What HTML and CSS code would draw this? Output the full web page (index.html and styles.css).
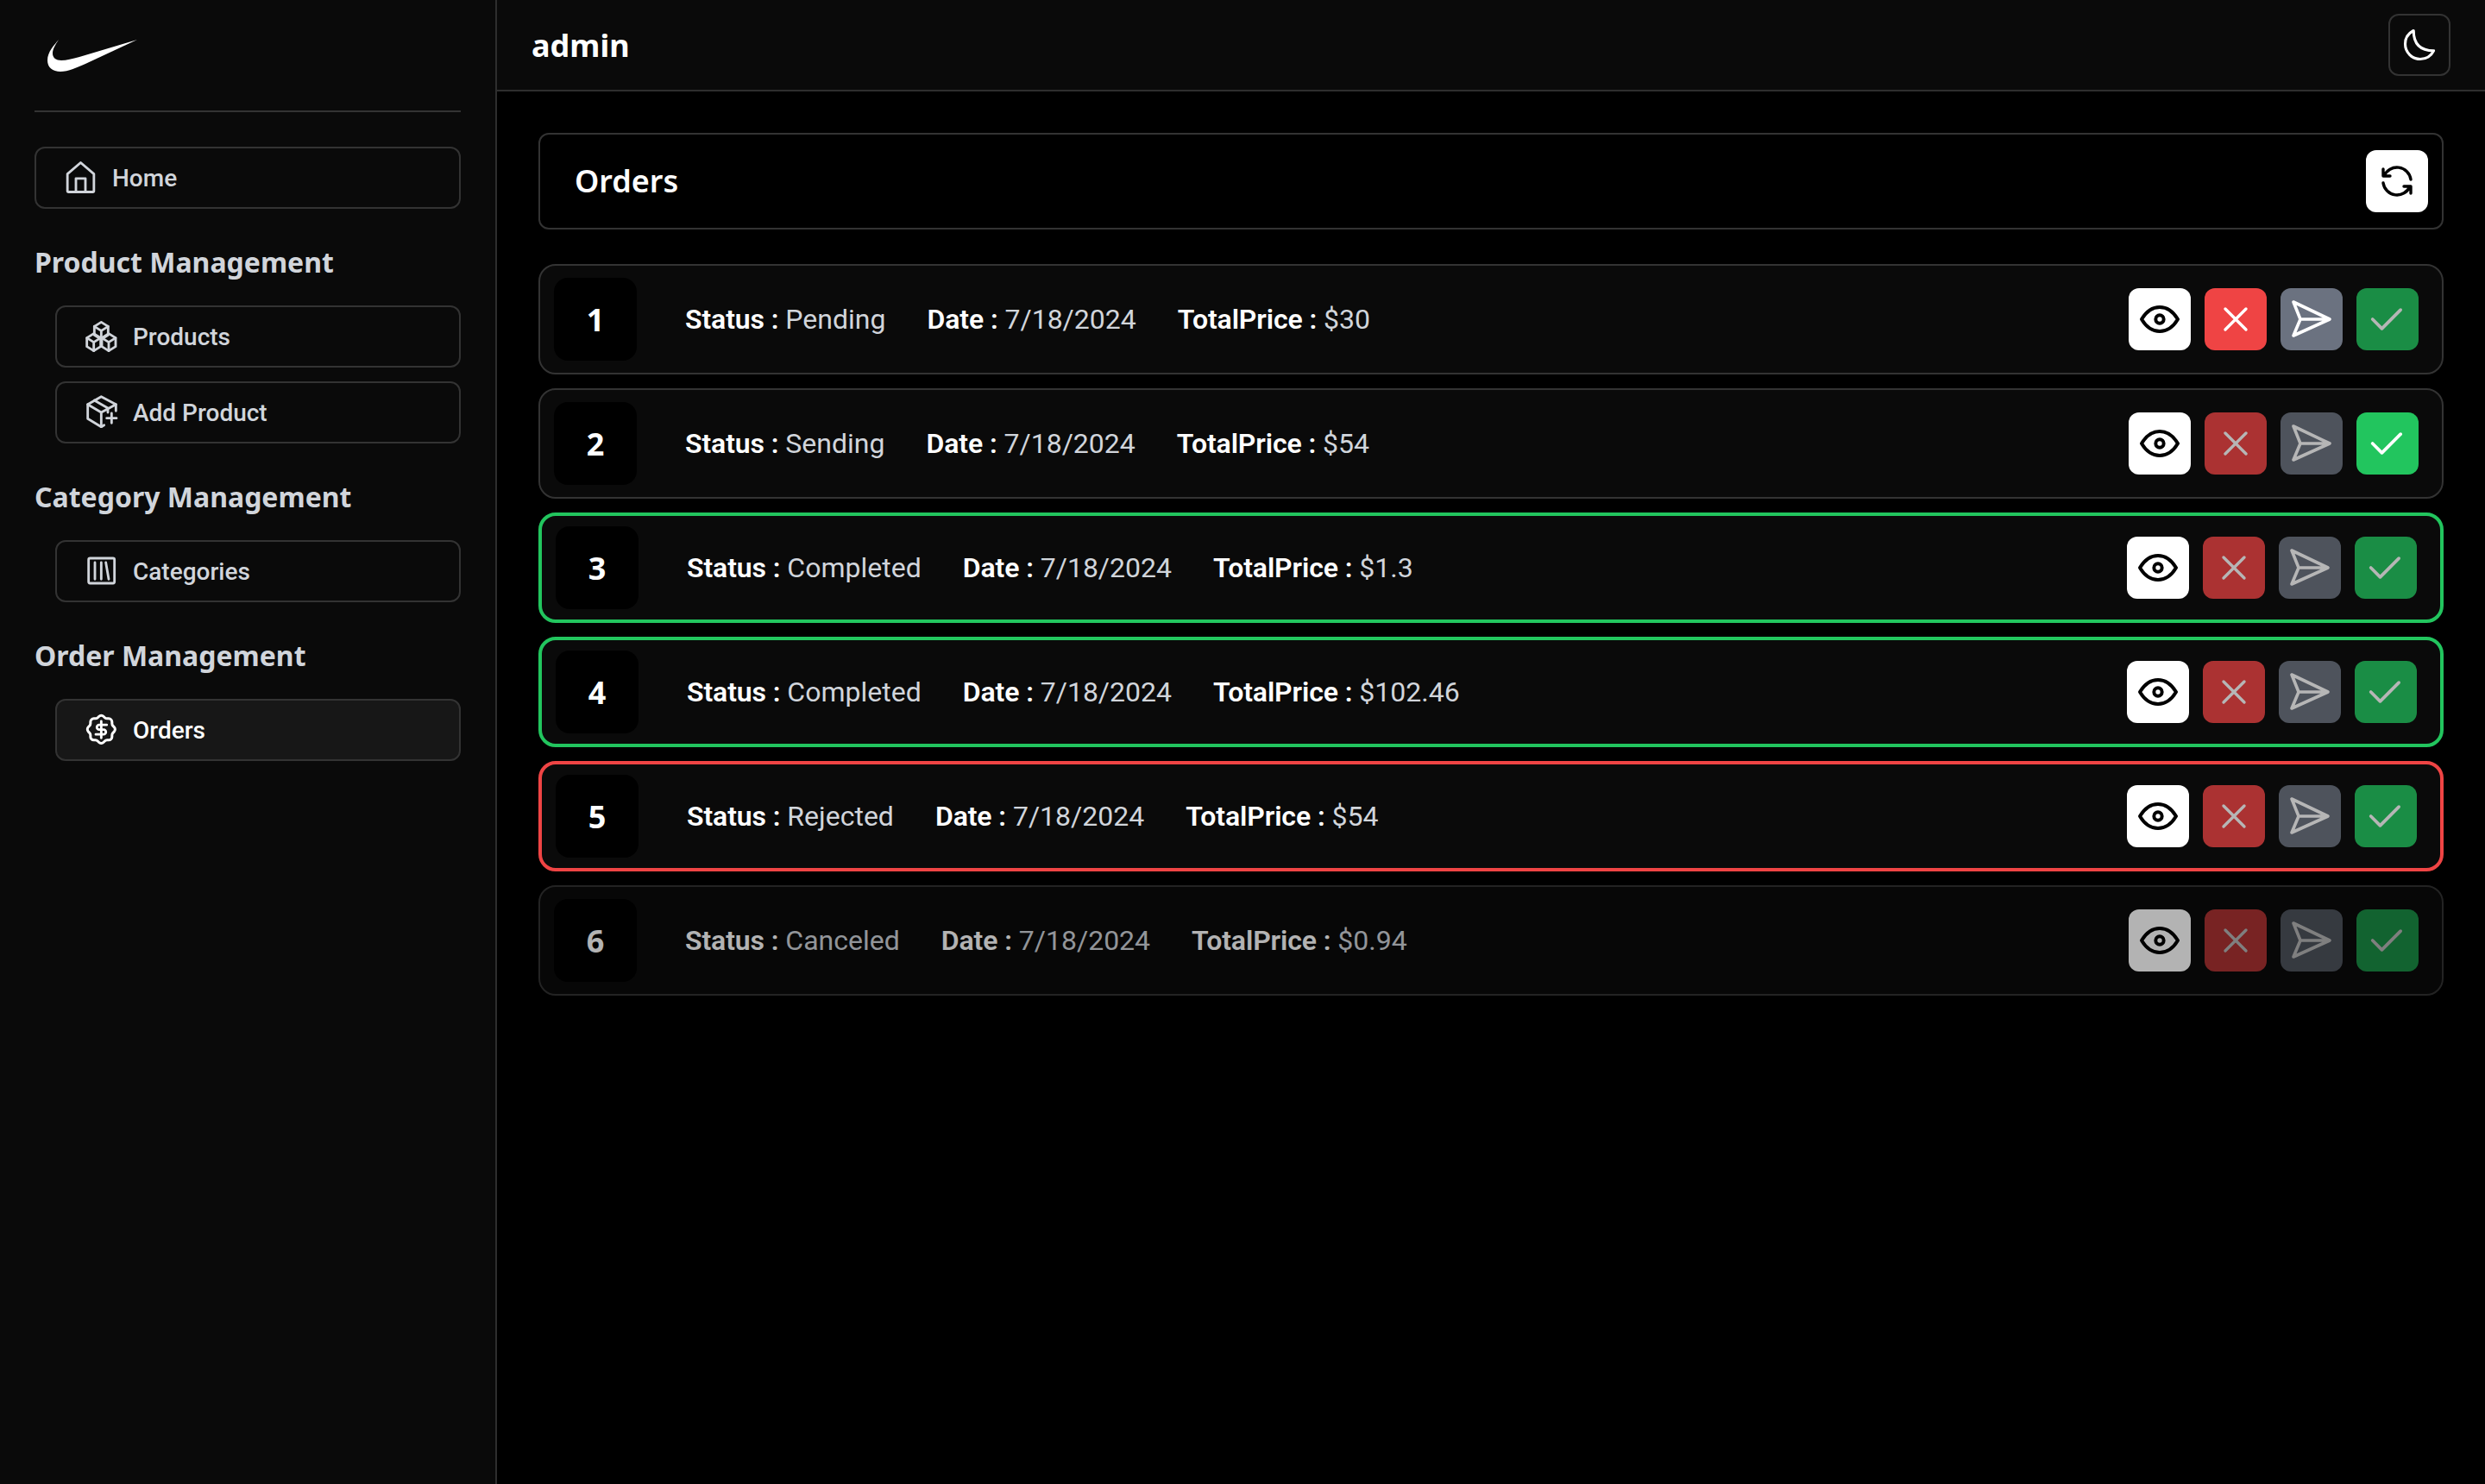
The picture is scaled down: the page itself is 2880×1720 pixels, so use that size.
FILE: index.html
```html
<!DOCTYPE html>
<html lang="en">

<head>
    <meta charset="UTF-8">
    <title>Orders</title>
    <link rel="stylesheet" href="styles.css">
</head>

<body>
    <aside class="sidebar">
        <div class="logo">
            <svg width="104" height="37" viewBox="0 0 104 37"><path fill="#fff" d="M13 0C8 6 0 14 0 24c0 8 6 13 15 13 9 0 20-5 29-9L104 0 37 20c-8 2-15 4-21 4C10 24 6 21 6 16 6 11 9 6 13 0Z"/></svg>
        </div>
        <hr class="divider">
        <a class="nav-btn">
            <svg class="nav-icon" viewBox="0 0 24 24"><path d="M3.700 9.400 12.900 1.500l9.200 7.900v11.700a.8.8 0 0 1-.8.8H4.500a.8.8 0 0 1-.8-.8Z"/><path d="M9.600 21.900v-9.400h6.600v9.400"/></svg>
            Home
        </a>

        <h3 class="nav-title">Product Management</h3>
        <div class="nav-group">
            <a class="nav-btn">
                <svg class="nav-icon" viewBox="0 0 24 24"><path d="M12.800 2 17.600 5v6l-4.800 3L8 11V5Z"/><path d="m8 5 4.800 3 4.800-3M12.800 8v6"/><path d="M7.600 10l4.800 3v6l-4.800 3-4.800-3v-6Z"/><path d="m2.800 13 4.800 3 4.800-3M7.600 16v6"/><path d="M18 10l4.800 3v6L18 22l-4.800-3v-6Z"/><path d="m13.200 13 4.800 3 4.800-3M18 16v6"/></svg>
                Products
            </a>
            <a class="nav-btn">
                <svg class="nav-icon" viewBox="0 0 24 24"><path d="M23 11V6.400L12.800 1 3.400 6.400v10L12.800 22l2-1.200"/><path d="M3.400 6.400 12.800 12 23 6.400M12.800 12v10M8 3.600 17.400 9v3"/><path d="M16.600 16h6.800M20 12.600v6.800"/></svg>
                Add Product
            </a>
        </div>

        <h3 class="nav-title">Category Management</h3>
        <div class="nav-group">
            <a class="nav-btn">
                <svg class="nav-icon" viewBox="0 0 24 24"><rect x="4" y="3" width="18" height="17.400" rx="1"/><path d="M8.400 6v11.600M12.800 6v11.600M16 6l2 11.600"/></svg>
                Categories
            </a>
        </div>

        <h3 class="nav-title">Order Management</h3>
        <div class="nav-group">
            <a class="nav-btn active">
                <svg class="nav-icon" viewBox="0 0 24 24"><path d="M5 7.200A2.200 2.200 0 0 1 7.200 5h1a2.200 2.200 0 0 0 1.550-.64l.7-.7a2.200 2.200 0 0 1 3.120 0l.7.7c.41.41.97.64 1.550.64h1A2.200 2.200 0 0 1 19 7.200v1c0 .58.23 1.140.64 1.550l.7.7a2.200 2.200 0 0 1 0 3.120l-.7.7a2.200 2.200 0 0 0-.64 1.550v1a2.200 2.200 0 0 1-2.200 2.200h-1a2.200 2.200 0 0 0-1.550.64l-.7.7a2.200 2.200 0 0 1-3.120 0l-.7-.7a2.200 2.200 0 0 0-1.550-.64h-1A2.200 2.200 0 0 1 5 16.800v-1a2.200 2.200 0 0 0-.64-1.550l-.7-.7a2.200 2.200 0 0 1 0-3.120l.7-.7A2.200 2.200 0 0 0 5 8.200Z" transform="translate(12.800 11.600) scale(1.070) translate(-12 -12)"/><path d="M16.600 8.500h-5.200a1.600 1.600 0 0 0 0 3.300h3a1.600 1.600 0 0 1 0 3.300H9M12.800 6v11.600"/></svg>
                Orders
            </a>
        </div>
    </aside>

    <div class="content">
        <header class="topbar">
            <span class="username">admin</span>
            <button class="theme-btn">
                <svg width="44" height="44" viewBox="0 0 24 24" class="line"><path d="M3 11.500a9.500 9.500 0 0 0 9.500 9.500c3.700 0 7-2.100 8.500-5.300-8.500 0-12.700-4.200-12.700-12.700C5.100 4.600 3 7.800 3 11.500Z"/></svg>
            </button>
        </header>

        <main class="main">
            <div class="page-head">
                <h1>Orders</h1>
                <button class="icon-btn white">
                    <svg width="48" height="48" viewBox="0 0 24 24" class="line"><path d="M20 11A8.100 8.100 0 0 0 4.500 9M4 5v4h4"/><path d="M4 13a8.100 8.100 0 0 0 15.500 2m.5 4v-4h-4"/></svg>
                </button>
            </div>

            <div class="order-list">
                <div class="order">
                    <div class="order-num">1</div>
                    <div class="order-info">
                        <span><b>Status :</b> Pending</span>
                        <span><b>Date :</b> 7/18/2024</span>
                        <span><b>TotalPrice :</b> $30</span>
                    </div>
                    <div class="actions">
                        <button class="icon-btn white"><svg width="56" height="56" viewBox="0 0 24 24" class="line"><path d="M10 12a2 2 0 1 0 4 0 2 2 0 0 0-4 0"/><path d="M21 12c-2.400 4-5.400 6-9 6s-6.600-2-9-6c2.400-4 5.400-6 9-6s6.600 2 9 6"/></svg></button>
                        <button class="icon-btn red"><svg width="48" height="48" viewBox="0 0 24 24" class="line"><path d="m18 6-12 12M6 6l12 12"/></svg></button>
                        <button class="icon-btn gray"><svg width="48" height="48" viewBox="0 0 48 48" class="line send"><path d="M3 4 45 24 3 43 11 24ZM11 24h34"/></svg></button>
                        <button class="icon-btn green off"><svg width="52" height="52" viewBox="0 0 24 24" class="line"><path d="m4 12 5 5L19 7"/></svg></button>
                    </div>
                </div>

                <div class="order">
                    <div class="order-num">2</div>
                    <div class="order-info">
                        <span><b>Status :</b> Sending</span>
                        <span><b>Date :</b> 7/18/2024</span>
                        <span><b>TotalPrice :</b> $54</span>
                    </div>
                    <div class="actions">
                        <button class="icon-btn white"><svg width="56" height="56" viewBox="0 0 24 24" class="line"><path d="M10 12a2 2 0 1 0 4 0 2 2 0 0 0-4 0"/><path d="M21 12c-2.400 4-5.400 6-9 6s-6.600-2-9-6c2.400-4 5.400-6 9-6s6.600 2 9 6"/></svg></button>
                        <button class="icon-btn red off"><svg width="48" height="48" viewBox="0 0 24 24" class="line"><path d="m18 6-12 12M6 6l12 12"/></svg></button>
                        <button class="icon-btn gray off"><svg width="48" height="48" viewBox="0 0 48 48" class="line send"><path d="M3 4 45 24 3 43 11 24ZM11 24h34"/></svg></button>
                        <button class="icon-btn green"><svg width="52" height="52" viewBox="0 0 24 24" class="line"><path d="m4 12 5 5L19 7"/></svg></button>
                    </div>
                </div>

                <div class="order completed">
                    <div class="order-num">3</div>
                    <div class="order-info">
                        <span><b>Status :</b> Completed</span>
                        <span><b>Date :</b> 7/18/2024</span>
                        <span><b>TotalPrice :</b> $1.3</span>
                    </div>
                    <div class="actions">
                        <button class="icon-btn white"><svg width="56" height="56" viewBox="0 0 24 24" class="line"><path d="M10 12a2 2 0 1 0 4 0 2 2 0 0 0-4 0"/><path d="M21 12c-2.400 4-5.400 6-9 6s-6.600-2-9-6c2.400-4 5.400-6 9-6s6.600 2 9 6"/></svg></button>
                        <button class="icon-btn red off"><svg width="48" height="48" viewBox="0 0 24 24" class="line"><path d="m18 6-12 12M6 6l12 12"/></svg></button>
                        <button class="icon-btn gray off"><svg width="48" height="48" viewBox="0 0 48 48" class="line send"><path d="M3 4 45 24 3 43 11 24ZM11 24h34"/></svg></button>
                        <button class="icon-btn green off"><svg width="52" height="52" viewBox="0 0 24 24" class="line"><path d="m4 12 5 5L19 7"/></svg></button>
                    </div>
                </div>

                <div class="order completed">
                    <div class="order-num">4</div>
                    <div class="order-info">
                        <span><b>Status :</b> Completed</span>
                        <span><b>Date :</b> 7/18/2024</span>
                        <span><b>TotalPrice :</b> $102.46</span>
                    </div>
                    <div class="actions">
                        <button class="icon-btn white"><svg width="56" height="56" viewBox="0 0 24 24" class="line"><path d="M10 12a2 2 0 1 0 4 0 2 2 0 0 0-4 0"/><path d="M21 12c-2.400 4-5.400 6-9 6s-6.600-2-9-6c2.400-4 5.400-6 9-6s6.600 2 9 6"/></svg></button>
                        <button class="icon-btn red off"><svg width="48" height="48" viewBox="0 0 24 24" class="line"><path d="m18 6-12 12M6 6l12 12"/></svg></button>
                        <button class="icon-btn gray off"><svg width="48" height="48" viewBox="0 0 48 48" class="line send"><path d="M3 4 45 24 3 43 11 24ZM11 24h34"/></svg></button>
                        <button class="icon-btn green off"><svg width="52" height="52" viewBox="0 0 24 24" class="line"><path d="m4 12 5 5L19 7"/></svg></button>
                    </div>
                </div>

                <div class="order rejected">
                    <div class="order-num">5</div>
                    <div class="order-info">
                        <span><b>Status :</b> Rejected</span>
                        <span><b>Date :</b> 7/18/2024</span>
                        <span><b>TotalPrice :</b> $54</span>
                    </div>
                    <div class="actions">
                        <button class="icon-btn white"><svg width="56" height="56" viewBox="0 0 24 24" class="line"><path d="M10 12a2 2 0 1 0 4 0 2 2 0 0 0-4 0"/><path d="M21 12c-2.400 4-5.400 6-9 6s-6.600-2-9-6c2.400-4 5.400-6 9-6s6.600 2 9 6"/></svg></button>
                        <button class="icon-btn red off"><svg width="48" height="48" viewBox="0 0 24 24" class="line"><path d="m18 6-12 12M6 6l12 12"/></svg></button>
                        <button class="icon-btn gray off"><svg width="48" height="48" viewBox="0 0 48 48" class="line send"><path d="M3 4 45 24 3 43 11 24ZM11 24h34"/></svg></button>
                        <button class="icon-btn green off"><svg width="52" height="52" viewBox="0 0 24 24" class="line"><path d="m4 12 5 5L19 7"/></svg></button>
                    </div>
                </div>

                <div class="order canceled">
                    <div class="order-num">6</div>
                    <div class="order-info">
                        <span><b>Status :</b> Canceled</span>
                        <span><b>Date :</b> 7/18/2024</span>
                        <span><b>TotalPrice :</b> $0.94</span>
                    </div>
                    <div class="actions">
                        <button class="icon-btn white"><svg width="56" height="56" viewBox="0 0 24 24" class="line"><path d="M10 12a2 2 0 1 0 4 0 2 2 0 0 0-4 0"/><path d="M21 12c-2.400 4-5.400 6-9 6s-6.600-2-9-6c2.400-4 5.400-6 9-6s6.600 2 9 6"/></svg></button>
                        <button class="icon-btn red off"><svg width="48" height="48" viewBox="0 0 24 24" class="line"><path d="m18 6-12 12M6 6l12 12"/></svg></button>
                        <button class="icon-btn gray off"><svg width="48" height="48" viewBox="0 0 48 48" class="line send"><path d="M3 4 45 24 3 43 11 24ZM11 24h34"/></svg></button>
                        <button class="icon-btn green off"><svg width="52" height="52" viewBox="0 0 24 24" class="line"><path d="m4 12 5 5L19 7"/></svg></button>
                    </div>
                </div>
            </div>
        </main>
    </div>
</body>

</html>
```
FILE: styles.css
```css
* {
    box-sizing: border-box;
}

body {
    margin: 0;
    height: 1720px;
    display: flex;
    background: #000;
    color: #fff;
    font-family: "Noto Sans", sans-serif;
    overflow: hidden;
}

/* sidebar */
.sidebar {
    width: 576px;
    flex-shrink: 0;
    padding: 0 40px;
    background: #0a0a0a;
    border-right: 2px solid #2e2e2e;
}

.logo {
    height: 128px;
    padding: 46px 0 0 15px;
}

.logo svg {
    display: block;
}

.divider {
    margin: 0 0 40px;
    border: 0;
    border-top: 2px solid #333;
}

.nav-btn {
    display: flex;
    align-items: center;
    gap: 18px;
    height: 72px;
    padding-left: 30px;
    border: 2px solid #333;
    border-radius: 12px;
    font-family: Roboto, sans-serif;
    font-size: 28px;
    font-weight: 500;
    color: #d1d5db;
}

.nav-btn.active {
    background: #171717;
    color: #fff;
}

.nav-icon {
    width: 40px;
    height: 40px;
    overflow: visible;
    fill: none;
    stroke: currentColor;
    stroke-width: 1.7;
    stroke-linecap: round;
    stroke-linejoin: round;
}

.nav-title {
    margin: 38px 0 26px;
    font-size: 32px;
    line-height: 48px;
    font-weight: 700;
    color: #d1d5db;
}

.nav-group {
    display: flex;
    flex-direction: column;
    gap: 16px;
    padding-left: 24px;
}

/* top bar */
.content {
    flex: 1;
    min-width: 0;
}

.topbar {
    display: flex;
    align-items: center;
    justify-content: space-between;
    height: 106px;
    padding: 0 40px;
    background: #0a0a0a;
    border-bottom: 2px solid #2e2e2e;
}

.username {
    font-size: 36px;
    font-weight: 700;
}

.theme-btn {
    display: flex;
    align-items: center;
    justify-content: center;
    width: 72px;
    height: 72px;
    padding: 0;
    background: transparent;
    border: 2px solid #333;
    border-radius: 12px;
    color: #fff;
}

.line {
    fill: none;
    stroke: currentColor;
    stroke-width: 1.7;
    stroke-linecap: round;
    stroke-linejoin: round;
}

.line.send {
    stroke-width: 3.6;
}

/* orders */
.main {
    padding: 48px;
}

.page-head {
    display: flex;
    align-items: center;
    justify-content: space-between;
    height: 112px;
    padding: 0 16px 0 40px;
    margin-bottom: 40px;
    border: 2px solid #333;
    border-radius: 12px;
}

.page-head h1 {
    margin: 0 0 2px;
    font-size: 36px;
    font-weight: 600;
}

.icon-btn {
    display: flex;
    align-items: center;
    justify-content: center;
    width: 72px;
    height: 72px;
    padding: 0;
    border: 0;
    border-radius: 12px;
    color: #fff;
}

.icon-btn.white {
    background: #fff;
    color: #000;
}

.icon-btn.red {
    background: #ef4444;
}

.icon-btn.gray {
    background: #6b7280;
}

.icon-btn.green {
    background: #22c55e;
}

.icon-btn.off {
    opacity: 0.7;
}

.order-list {
    display: flex;
    flex-direction: column;
    gap: 16px;
}

.order {
    display: flex;
    align-items: center;
    height: 128px;
    padding: 0 27px 0 16px;
    background: #0a0a0a;
    border: 2px solid #333;
    border-radius: 20px;
}

.order.completed {
    border: 4px solid #22c55e;
}

.order.rejected {
    border: 4px solid #ef4444;
}

.order.canceled {
    opacity: 0.7;
}

.order-num {
    display: flex;
    align-items: center;
    justify-content: center;
    width: 96px;
    height: 96px;
    flex-shrink: 0;
    background: #000;
    border-radius: 16px;
    font-size: 36px;
    font-weight: 700;
}

.order-info {
    display: flex;
    gap: 48px;
    margin-left: 56px;
    font-family: Roboto, sans-serif;
    font-size: 32px;
    color: #d1d5db;
}

.order-info b {
    font-weight: 600;
    letter-spacing: -0.1px;
    color: #fff;
}

.actions {
    display: flex;
    gap: 16px;
    margin-left: auto;
}
```
